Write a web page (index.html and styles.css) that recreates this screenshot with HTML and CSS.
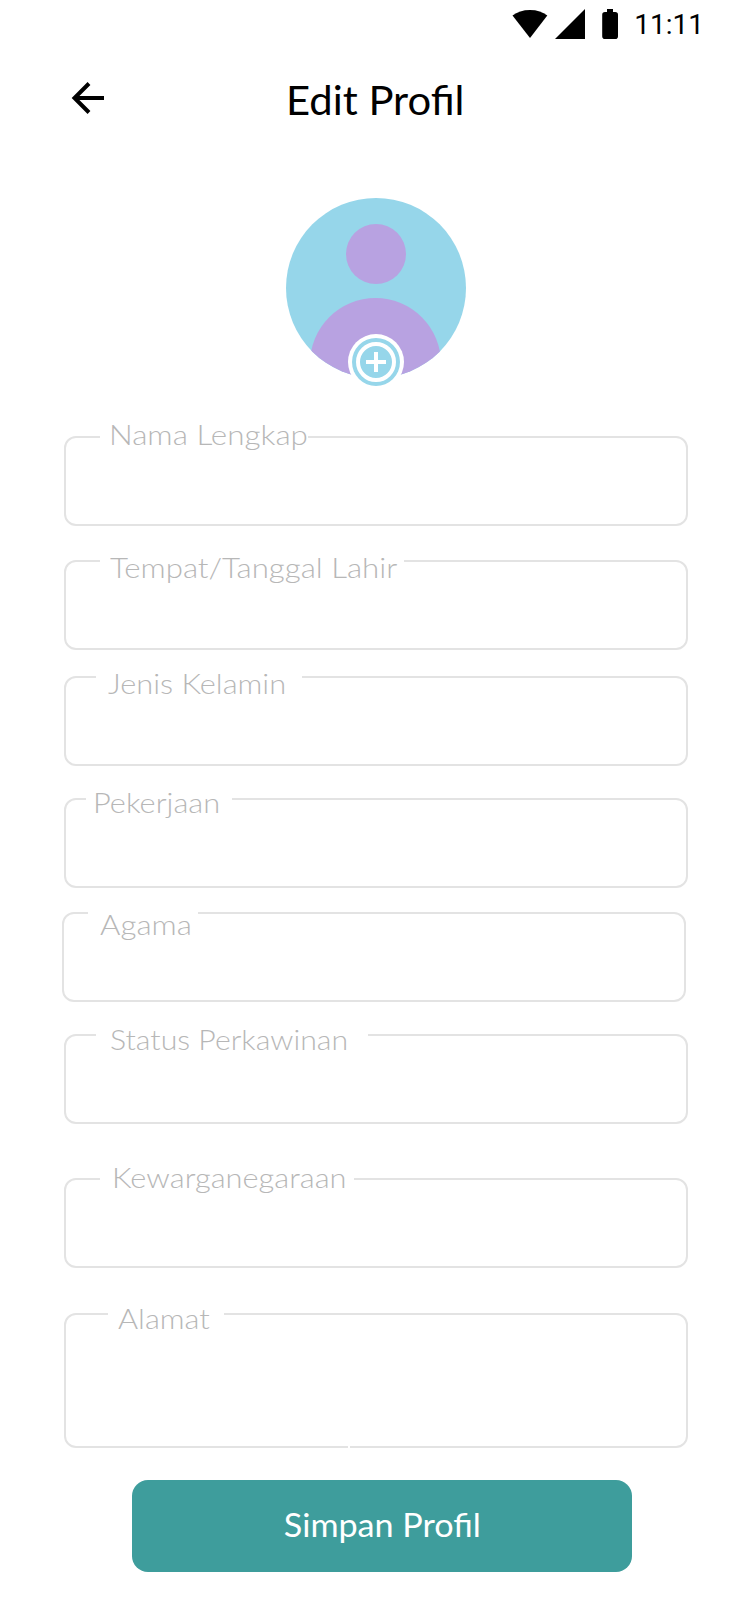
FILE: index.html
```html
<!DOCTYPE html>
<html lang="id">
<head>
<meta charset="utf-8">
<title>Edit Profil</title>
<link rel="stylesheet" href="styles.css">
</head>
<body>
<div class="status">
  <svg class="status-icons" width="106" height="30" viewBox="0 0 106 30">
    <path d="M0.5 6.5C5 3 11 1 18 1s13 2 17.300 5.500L18 29z"/>
    <path d="M43 30L73 0v30z"/>
    <path d="M95 0h6v3h2.200q2.800 0 2.800 2.800v21.400q0 2.800-2.800 2.800H93q-2.800 0-2.800-2.800V5.800Q90.200 3 93 3h2z"/>
  </svg>
  <span class="clock">11:11</span>
</div>
<header class="header">
  <svg class="back" width="34" height="34" viewBox="0 0 34 34"><path d="M18 2.500L3.500 17L18 31.500M3.500 17H33"/></svg>
  <h1 class="title">Edit Profil</h1>
</header>
<svg class="avatar" width="180" height="190" viewBox="0 0 180 190">
  <clipPath id="disc"><circle cx="90" cy="90" r="90"/></clipPath>
  <circle class="sky" cx="90" cy="90" r="90"/>
  <g class="person" clip-path="url(#disc)"><circle cx="90" cy="56" r="30"/><circle cx="89.500" cy="165.500" r="65.500"/></g>
  <circle class="white" cx="90" cy="164" r="28"/>
  <circle class="sky" cx="90" cy="164" r="24"/>
  <circle class="ring" cx="90" cy="164" r="18"/>
  <path class="ring" d="M80 164h20M90 154v20"/>
</svg>
<form class="form">
  <div class="field nama"><label class="label"><span class="wide">Nama Lengkap</span></label></div>
  <div class="field lahir"><label class="label"><span class="wide">Tempat/Tanggal Lahir</span></label></div>
  <div class="field kelamin"><label class="label"><span class="wide">Jenis Kelamin</span></label></div>
  <div class="field kerja"><label class="label"><span class="wide">Pekerjaan</span></label></div>
  <div class="field agama"><label class="label"><span class="wide">Agama</span></label></div>
  <div class="field kawin"><label class="label"><span class="wide">Status Perkawinan</span></label></div>
  <div class="field warga"><label class="label"><span class="wide">Kewarganegaraan</span></label></div>
  <div class="field alamat"><label class="label"><span class="wide">Alamat</span></label><i class="notch"></i></div>
  <button class="save" type="button"><span class="save-text">Simpan Profil</span></button>
</form>
</body>
</html>
```
FILE: styles.css
```css
* { box-sizing: border-box; }
body { margin: 0; width: 750px; height: 1624px; background: #fff; font-family: Lato, "Open Sans", sans-serif; overflow: hidden; }
.status { display: flex; justify-content: flex-end; height: 48px; padding: 9px 46px 0 0; }
.status-icons { margin-right: 16px; }
.clock { padding-top: 1px; font: 400 28px/30px Roboto, sans-serif; }
.header { display: flex; height: 104px; padding: 33px 72px 0; }
.back { margin-left: -1px; fill: none; stroke: #000; stroke-width: 4; }
.title { margin: -1px 0 0 181px; font-size: 40px; line-height: 40px; font-weight: 400; white-space: nowrap; transform: scaleX(1.045); transform-origin: left; }
.avatar { display: block; margin: 46px 0 0 286px; }
.sky { fill: #96d6ea; }
.person { fill: #b8a2e1; }
.white { fill: #fff; }
.ring { fill: none; stroke: #fff; stroke-width: 4; }
.form { display: flex; flex-direction: column; padding: 48px 62px 0 64px; }
.field { display: flex; align-items: flex-start; justify-content: flex-start; width: 624px; height: 90px; border: 2px solid #e3e3e3; border-radius: 12px; }
.label { display: block; height: 28px; background: #fff; color: #b7b7b7; font-size: 28px; line-height: 28px; font-weight: 300; white-space: nowrap; }
.wide { display: inline-block; transform: scaleX(1.1); transform-origin: left; }
.nama .label { margin: -18px 0 0 34px; width: 208px; padding-left: 9px; }
.nama .wide { transform: scaleX(1.122); }
.lahir { margin-top: 34px; }
.lahir .label { margin: -9px 0 0 34px; width: 304px; padding-left: 10px; }
.lahir .wide { transform: scaleX(1.116); }
.kelamin { margin-top: 26px; }
.kelamin .label { margin: -9px 0 0 30px; width: 206px; padding-left: 12px; }
.kerja { margin-top: 32px; }
.kerja .label { margin: -12px 0 0 20px; width: 146px; padding-left: 7px; }
.agama { margin: 24px 0 0 -2px; }
.agama .label { margin: -4px 0 0 24px; width: 110px; padding-left: 12px; }
.agama .wide { transform: scaleX(1.115); }
.kawin { margin-top: 32px; }
.kawin .label { margin: -11px 0 0 30px; width: 272px; padding-left: 14px; }
.kawin .wide { transform: scaleX(1.08); }
.warga { margin-top: 54px; }
.warga .label { margin: -17px 0 0 34px; width: 254px; padding-left: 12px; }
.alamat { position: relative; margin-top: 45px; height: 135px; }
.alamat .label { margin: -11px 0 0 42px; width: 116px; padding-left: 10px; }
.notch { position: absolute; left: 282px; bottom: -2px; width: 2px; height: 2px; background: #fff; }
.save { margin: 32px 0 0 68px; width: 500px; height: 92px; padding: 0 0 4px; border: 0; border-radius: 16px; background: #3e9d9c; color: #fff; font: 400 32px Lato, "Open Sans", sans-serif; }
.save-text { display: inline-block; transform: scaleX(1.067); }
```
